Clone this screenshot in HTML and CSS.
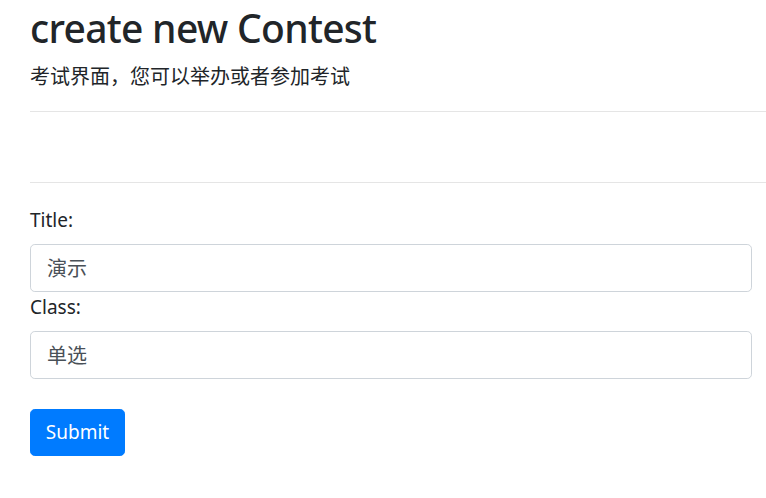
FILE: index.html
```html
<!DOCTYPE html>
<html lang="zh">
<head>
<meta charset="utf-8">
<title>create new Contest</title>
<link rel="stylesheet" href="styles.css">
</head>
<body>
<div class="page">
  <header class="intro">
    <h1 class="title">create new Contest</h1>
    <p class="lead">考试界面，您可以举办或者参加考试</p>
  </header>
  <hr class="rule">
  <div class="spacer"></div>
  <hr class="rule">
  <form class="contest-form">
    <label class="field-label" for="title">Title:</label>
    <input class="field-input" id="title" type="text" value="演示">
    <label class="field-label" for="klass">Class:</label>
    <input class="field-input" id="klass" type="text" value="单选">
    <button class="submit-btn" type="submit">Submit</button>
  </form>
</div>
</body>
</html>
```

FILE: styles.css
```css
html, body {
  margin: 0;
  padding: 0;
  background: #fff;
}
body {
  font-family: "Noto Sans", "Noto Sans CJK SC", sans-serif;
  color: #212529;
  font-size: 16px;
  line-height: 1.5;
}
.page {
  padding-left: 30px;
}
.intro {
  padding-top: 5px;
  padding-bottom: 20px;
}
.title {
  margin: 0 0 9px 0;
  font-size: 39px;
  font-weight: 500;
  line-height: 1.2;
  letter-spacing: -0.7px;
}
.lead {
  margin: 0;
  font-size: 20px;
  font-weight: 400;
  line-height: 30px;
  color: #212529;
  font-family: "Noto Sans CJK SC", "Noto Sans", sans-serif;
}
.rule {
  margin: 0;
  border: 0;
  border-top: 1px solid rgba(0, 0, 0, 0.1);
}
.spacer {
  height: 70px;
}
.contest-form {
  display: flex;
  flex-direction: column;
  align-items: flex-start;
  padding-right: 14px;
  padding-top: 22px;
}
.field-label {
  display: block;
  margin-bottom: 9px;
  font-size: 19px;
  line-height: 30px;
}
.field-input {
  box-sizing: border-box;
  align-self: stretch;
  height: 48px;
  margin: 0;
  padding: 8px 16px;
  font-size: 20px;
  line-height: 1.5;
  font-family: "Noto Sans CJK SC", "Noto Sans", sans-serif;
  color: #495057;
  background: #fff;
  border: 1px solid #ced4da;
  border-radius: 4.8px;
}
.submit-btn {
  margin-top: 30px;
  box-sizing: border-box;
  height: 47px;
  width: 95px;
  padding: 0;
  font-family: "Noto Sans", sans-serif;
  font-size: 19px;
  line-height: 1.5;
  color: #fff;
  background: #007bff;
  border: 1px solid #007bff;
  border-radius: 4.8px;
}
```
